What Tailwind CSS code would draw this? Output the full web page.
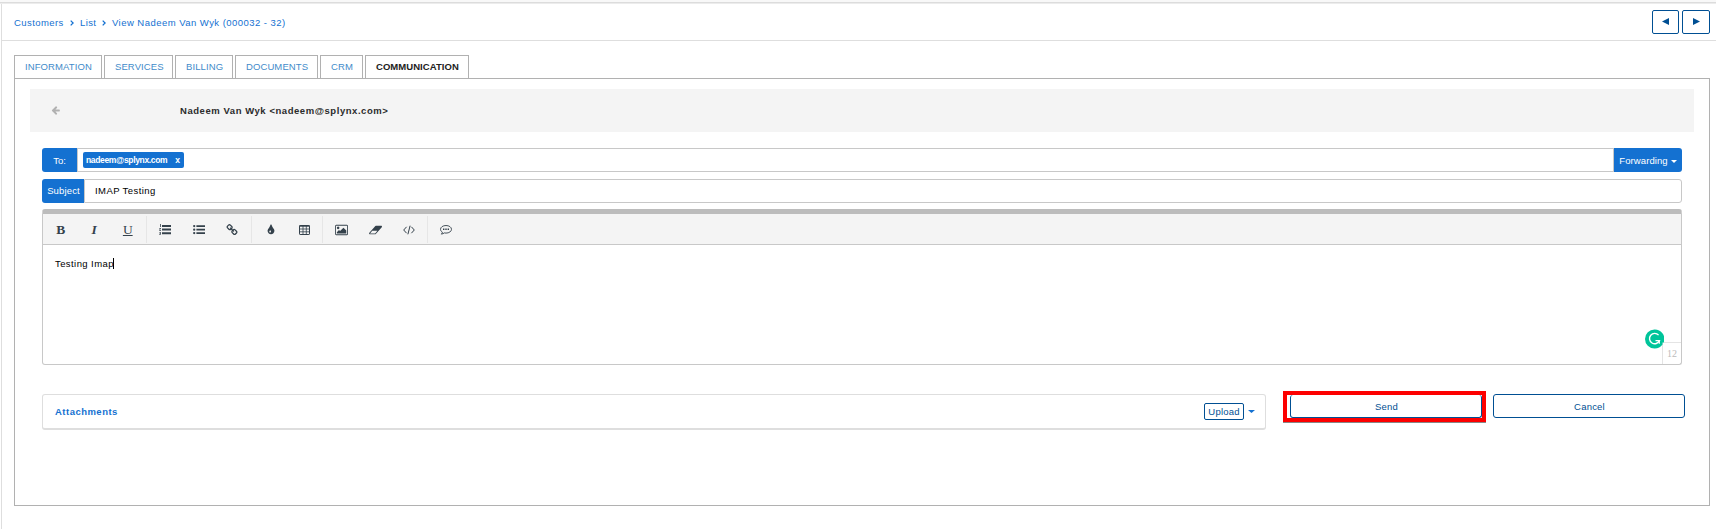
<!DOCTYPE html>
<html lang="en">
<head>
<meta charset="utf-8">
<title>Communication</title>
<script src="https://cdn.jsdelivr.net/npm/@tailwindcss/browser@4"></script>
</head>
<body class="bg-white font-['Liberation_Sans',Arial,sans-serif] text-[9.5px] leading-[14px] text-[#333]">
<div class="flex h-[529px] w-[1716px] flex-col overflow-hidden">
  <div class="h-[4px] shrink-0 border-b border-[#ececec] bg-[#f8f8f8]"><div class="mt-[2px] h-px bg-[#dcdcdc]"></div></div>
  <div class="ml-px flex grow flex-col border-l border-[#dedede]">
    <header class="flex h-[37px] shrink-0 items-center justify-between border-b border-[#dedede] pl-[12px] pr-[6px]">
      <nav class="flex items-center pt-px text-[#1471d1]">
        <a class="w-[50px] whitespace-nowrap tracking-[0.43px]">Customers</a>
        <svg class="ml-[6px] mr-[6px] h-[6px] w-[4px]" viewBox="0 0 4 6" fill="none" stroke="currentColor" stroke-width="1.3"><path d="M.7.6 3.1 3 .7 5.4"/></svg>
        <a class="w-[17px] tracking-[0.4px]">List</a>
        <svg class="ml-[5px] mr-[6px] h-[6px] w-[4px]" viewBox="0 0 4 6" fill="none" stroke="currentColor" stroke-width="1.3"><path d="M.7.6 3.1 3 .7 5.4"/></svg>
        <a class="whitespace-nowrap tracking-[0.46px]">View Nadeem Van Wyk (000032 - 32)</a>
      </nav>
      <div class="flex gap-[3px] text-[#004f93]">
        <button class="flex h-[24px] w-[27px] items-center justify-center rounded-[2px] border border-current pb-px"><svg class="h-[7px] w-[7px]" viewBox="0 0 7 7" fill="currentColor"><path d="M7 0v7L0 3.500z"/></svg></button>
        <button class="flex h-[24px] w-[28px] items-center justify-center rounded-[2px] border border-current pb-px"><svg class="h-[7px] w-[7px]" viewBox="0 0 7 7" fill="currentColor"><path d="M0 0v7l7-3.500z"/></svg></button>
      </div>
    </header>

    <div class="mt-[14px] flex h-[23px] shrink-0 gap-[2px] pl-[12px] tracking-[0.1px] text-[#428bca]">
      <a class="flex w-[88px] items-center border border-b-0 border-[#b1b1b1] pl-[10px]">INFORMATION</a>
      <a class="flex w-[69px] items-center border border-b-0 border-[#b1b1b1] pl-[10px]">SERVICES</a>
      <a class="flex w-[58px] items-center border border-b-0 border-[#b1b1b1] pl-[10px]">BILLING</a>
      <a class="flex w-[83px] items-center border border-b-0 border-[#b1b1b1] pl-[10px]">DOCUMENTS</a>
      <a class="flex w-[43px] items-center border border-b-0 border-[#b1b1b1] pl-[10px]">CRM</a>
      <a class="flex w-[104px] items-center border border-b-0 border-[#b1b1b1] pl-[10px] font-bold tracking-[0.05px] text-[#222]">COMMUNICATION</a>
    </div>

    <main class="ml-[12px] flex h-[428px] w-[1696px] shrink-0 flex-col border border-[#b1b1b1] pl-[15px] pt-[10px]">
      <div class="flex h-[43px] w-[1664px] items-center bg-[#f4f4f4] pl-[21px]">
        <svg class="h-[9px] w-[9px] text-[#b1b1b1]" viewBox="64 128 1600 1664" fill="currentColor"><path d="M1664 896v128q0 53-32.500 90.500t-84.500 37.500h-704l293 294q38 36 38 90t-38 90l-75 76q-37 37-90 37-52 0-91-37l-651-652q-37-37-37-90 0-52 37-91l651-650q38-38 91-38 52 0 90 38l75 74q38 38 38 91t-38 91l-293 293h704q52 0 84.500 37.500t32.500 90.500z"/></svg>
        <span class="ml-[120px] font-bold tracking-[0.55px] text-[#2b2b2b]">Nadeem Van Wyk &lt;nadeem@splynx.com&gt;</span>
      </div>

      <div class="ml-[12px] mt-[16px] flex h-[24px] w-[1640px]">
        <div class="flex w-[35px] items-center justify-center rounded-l-[3px] bg-[#1471d1] pt-px text-white">To:</div>
        <div class="flex grow items-center border border-[#c8c8c8] pl-[5px]">
          <span class="flex h-[16px] w-[101px] items-center justify-between rounded-[2px] bg-[#1471d1] pl-[3px] pr-[4px] text-[8.500px] font-bold text-white"><span class="tracking-[-0.35px]">nadeem@splynx.com</span><span>x</span></span>
        </div>
        <button class="flex w-[68px] items-center justify-center gap-[3px] rounded-r-[3px] bg-[#1471d1] pt-px text-white"><span class="tracking-[0.1px]">Forwarding</span><svg class="mt-px h-[3px] w-[6px]" viewBox="0 0 6 3" fill="currentColor"><path d="M0 0h6L3 3z"/></svg></button>
      </div>

      <div class="ml-[12px] mt-[7px] flex h-[24px] w-[1640px]">
        <div class="flex w-[42px] items-center justify-center rounded-l-[3px] bg-[#1471d1] pl-px tracking-[0.15px] text-white">Subject</div>
        <div class="flex grow items-center rounded-r-[3px] border border-[#c8c8c8] pl-[10px] tracking-[0.42px] text-black">IMAP Testing</div>
      </div>

      <div class="relative ml-[12px] mt-[6px] flex h-[156px] w-[1640px] flex-col rounded-[3px] border border-t-[5px] border-[#c8c8c8] border-t-[#bcbcbc]">
        <div class="flex h-[31px] w-full border-b border-[#c8c8c8] bg-[#f4f4f4] pt-[2px] text-[#34414b]">
          <div class="flex h-[27px] w-[104px] border-r border-[#e6e6e6] pl-px font-['Liberation_Serif',serif] text-[13.500px] leading-[27px]">
            <span class="w-[33.500px] text-center font-bold">B</span>
            <span class="w-[33.500px] text-center font-bold italic">I</span>
            <span class="w-[33.500px] text-center"><span class="underline underline-offset-[1px]">U</span></span>
          </div>
          <div class="flex h-[27px] w-[105px] items-center border-r border-[#e6e6e6] pl-[1.500px]">
            <span class="flex w-[33.500px] justify-center"><svg class="h-[11px] w-[12px]" viewBox="0 0 12 11" fill="currentColor"><path d="M3 1h9v2H3zM3 4.600h9v2H3zM3 8.200h9v2H3z"/><path d="M1 0h.8v3H1zM.3 4h1.600v.6l-.9 1.500h1v.7H.2v-.6L1 4.700H.3zM.2 7.900h1.700v.7l-.6.5q.7.2.7.8 0 1.100-1.800 1v-.7h.9v-.4H.6v-.6l.5-.6H.2z"/></svg></span>
            <span class="flex w-[33.500px] justify-center"><svg class="h-[11px] w-[12px]" viewBox="0 0 12 11" fill="currentColor"><path d="M3.400 1.200H12V3H3.400zM3.400 4.800H12v1.800H3.400zM3.400 8.200H12V10H3.400z"/><circle cx="1.200" cy="2.100" r="1.150"/><circle cx="1.200" cy="5.700" r="1.150"/><circle cx="1.200" cy="9.100" r="1.150"/></svg></span>
            <span class="flex w-[33.500px] justify-center"><svg class="h-[12px] w-[12px]" viewBox="0 0 1792 1792" fill="currentColor"><path d="M1520 1216q0-40-28-68l-208-208q-28-28-68-28-42 0-72 32 3 3 19 18.500t21.500 21.500 15 19 13 25.500 3.500 27.500q0 40-28 68t-68 28q-15 0-27.500-3.500t-25.500-13-19-15-21.500-21.500-18.500-19q-33 31-33 73 0 40 28 68l206 207q27 27 68 27 40 0 68-26l147-146q28-28 28-67zm-703-705q0-40-28-68l-206-207q-28-28-68-28-39 0-68 27l-147 146q-28 28-28 67 0 40 28 68l208 208q27 27 68 27 42 0 72-31-3-3-19-18.500t-21.500-21.500-15-19-13-25.500-3.500-27.500q0-40 28-68t68-28q15 0 27.500 3.500t25.500 13 19 15 21.500 21.500 18.500 19q33-31 33-73zm895 705q0 120-85 203l-147 146q-83 83-203 83-121 0-204-85l-206-207q-83-83-83-203 0-123 88-209l-88-88q-86 88-208 88-120 0-204-84l-208-208q-84-84-84-204t85-203l147-146q83-83 203-83 121 0 204 85l206 207q83 83 83 203 0 123-88 209l88 88q86-88 208-88 120 0 204 84l208 208q84 84 84 204z"/></svg></span>
          </div>
          <div class="flex h-[27px] w-[71px] items-center border-r border-[#e6e6e6] pl-[2px]">
            <span class="flex w-[33.500px] justify-center"><svg class="h-[12px] w-[12px]" viewBox="0 0 1792 1792" fill="currentColor"><path d="M896 1152q0-36-20-69-1-1-15.500-22.500t-25.500-38-25-44-21-50.500q-4-16-21-16t-21 16q-7 23-21 50.500t-25 44-25.500 38-15.500 22.500q-20 33-20 69 0 53 37.500 90.500t90.500 37.500 90.500-37.500 37.500-90.500zm512-128q0 212-150 362t-362 150-362-150-150-362q0-145 81-275 6-9 62.500-90.500t101-151 99.500-178 83-201.500q9-30 34-47t51-17 51.500 17 33.500 47q28 93 83 201.500t99.500 178 101 151 62.500 90.500q81 127 81 275z"/></svg></span>
            <span class="flex w-[33.500px] justify-center"><svg class="h-[10px] w-[11px]" viewBox="0 0 11 10" fill="none" stroke="currentColor"><rect x=".5" y=".5" width="10" height="9" rx=".6"/><path d="M.5 1h10" stroke-width="1.400"/><path d="M4 1v8.500M7.300 1v8.500M.5 4h10M.5 6.800h10" stroke-width=".8"/></svg></span>
          </div>
          <div class="flex h-[27px] w-[105px] items-center border-r border-[#e6e6e6] pl-[2px]">
            <span class="flex w-[33.500px] justify-center"><svg class="h-[12px] w-[13px]" viewBox="-20 0 1942 1792" fill="currentColor"><path d="M640 576q0 80-56 136t-136 56-136-56-56-136 56-136 136-56 136 56 56 136zm1024 384v448h-1408v-192l320-320 160 160 512-512zm96-704h-1600q-13 0-22.500 9.500t-9.500 22.500v1216q0 13 9.500 22.500t22.500 9.500h1600q13 0 22.500-9.500t9.500-22.500v-1216q0-13-9.500-22.500t-22.500-9.500zm160 32v1216q0 66-47 113t-113 47h-1600q-66 0-113-47t-47-113v-1216q0-66 47-113t113-47h1600q66 0 113 47t47 113z"/></svg></span>
            <span class="flex w-[33.500px] justify-center"><svg class="h-[12px] w-[13px]" viewBox="-20 0 1942 1792" fill="currentColor"><path d="M896 1408l336-384h-768l-336 384h768zm1013-1077q15 34 9.500 71.500t-30.500 65.500l-896 1024q-38 44-96 44h-768q-38 0-69.500-20.500t-47.500-54.500q-15-34-9.500-71.500t30.500-65.500l896-1024q38-44 96-44h768q38 0 69.500 20.500t47.500 54.500z"/></svg></span>
            <span class="flex w-[33.500px] justify-center"><svg class="h-[10px] w-[12px]" viewBox="0 0 12 10" fill="none" stroke="currentColor" stroke-width="1"><path d="M3.600 1.800.7 5l2.900 3.200M8.400 1.800 11.300 5 8.400 8.200M7.100.7 4.900 9.300"/></svg></span>
          </div>
          <div class="flex h-[27px] items-center pl-px">
            <span class="flex w-[33.500px] justify-center"><svg class="mt-px h-[10px] w-[12px]" viewBox="0 0 12 10" fill="none" stroke="currentColor" stroke-width=".9"><path d="M6 .5C2.900.5.500 2.200.500 4.300c0 1.200.8 2.200 1.900 2.900-.1.800-.6 1.400-1.100 1.900 1.300-.1 2.300-.6 3-1.200.5.100 1.100.2 1.700.2 3.100 0 5.500-1.700 5.500-3.800S9.100.5 6 .5z"/><path d="M3 4.300h1.400M5.300 4.300h1.400M7.600 4.300H9" stroke-width="1.400"/></svg></span>
          </div>
        </div>
        <div class="flex grow items-start pl-[12px] pt-[12px] text-black"><span class="tracking-[0.42px]">Testing Imap</span><span class="ml-[-0.500px] mt-px h-[11px] w-px bg-black"></span></div>
        <div class="absolute bottom-0 right-0 flex h-[22px] w-[19px] items-center justify-center border-l border-t border-[#e4e4e4] font-['Liberation_Serif',serif] text-[10px] text-[#bbb]">12</div>
        <svg class="absolute bottom-[15px] right-[17px] h-[20px] w-[19px]" viewBox="0 0 19 20"><path d="M9.500.5a9.500 9.500 0 1 0 0 19 9.500 9.500 0 0 0 8-4V13.500h1.200A9.500 9.500 0 0 0 9.500.5z" fill="#00c49a"/><path d="M13.600 6.100A5.200 5.200 0 1 0 14.500 11.600H10.500" fill="none" stroke="#fff" stroke-width="1.400"/><path d="M14.300 11v3.800" stroke="#fff" stroke-width="1.200"/></svg>
      </div>

      <div class="ml-[12px] mt-[26px] flex items-start">
        <section class="mt-[3px] flex h-[36px] w-[1224px] items-center justify-between rounded-[3px] border border-b-2 border-[#dedede] pl-[12px] pr-[10px]">
          <h3 class="font-bold tracking-[0.480px] text-[#1471d1]">Attachments</h3>
          <div class="flex items-center gap-[4px] text-[#1471d1]">
            <button class="flex h-[17px] w-[40px] items-center justify-center rounded-[2px] border border-[#004f93] pt-px tracking-[0.200px] text-[#004f93]">Upload</button>
            <svg class="h-[3px] w-[7px]" viewBox="0 0 7 3" fill="currentColor"><path d="M0 0h7L3.500 3z"/></svg>
          </div>
        </section>
        <div class="ml-[17px] flex h-[31px] w-[203px] border-4 border-[#fd0000] pl-[3px] shadow-[0_1px_0_#888]">
          <button class="flex h-[23px] w-[192px] items-center justify-center rounded-[3px] border border-t-0 border-[#004f93] pl-px pt-px tracking-[0.200px] text-[#004f93]">Send</button>
        </div>
        <button class="ml-[7px] mt-[3px] flex h-[24px] w-[192px] items-center justify-center rounded-[3px] border border-[#004f93] pl-px pt-[2px] tracking-[0.200px] text-[#004f93]">Cancel</button>
      </div>
    </main>
  </div>
</div>
</body>
</html>
